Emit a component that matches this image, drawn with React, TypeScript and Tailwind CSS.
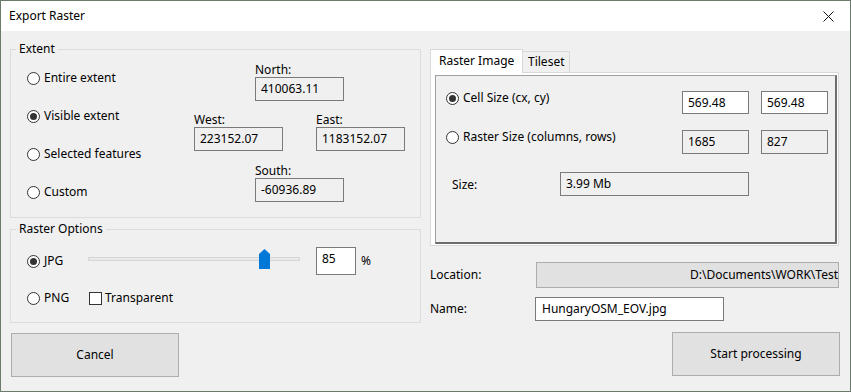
import type { ReactNode } from "react";

function Radio({ checked, label }: { checked?: boolean; label: string }) {
  return (
    <div className="flex items-center h-[16px]">
      <span className="flex h-[13px] w-[13px] items-center justify-center rounded-full border border-[#333333] bg-white">
        {checked && <span className="h-[7px] w-[7px] rounded-full bg-[#333333]" />}
      </span>
      <span className="ml-[4px] whitespace-nowrap">{label}</span>
    </div>
  );
}

function Field({
  value,
  width,
  height = "h-[23px]",
  white,
}: {
  value: string;
  width: string;
  height?: string;
  white?: boolean;
}) {
  return (
    <div
      className={`${width} ${height} flex items-center border border-[#7a7a7a] pl-[5px] ${
        white ? "bg-white" : "bg-[#f0f0f0]"
      }`}
    >
      {value}
    </div>
  );
}

function Coord({ label, value }: { label: string; value: string }) {
  return (
    <div className="flex w-[89px] flex-col">
      <div className="h-[14px] leading-[14px]">{label}</div>
      <Field value={value} width="w-[89px]" height="h-[24px]" />
    </div>
  );
}

function Group({
  title,
  height,
  className = "",
  children,
}: {
  title: string;
  height: string;
  className?: string;
  children: ReactNode;
}) {
  return (
    <fieldset className={`${height} ${className} w-[411px] border border-[#dcdcdc]`}>
      <legend className="ml-[5px] px-[3px] leading-[16px]">{title}</legend>
      {children}
    </fieldset>
  );
}

export default function App() {
  return (
    <div className="flex h-[392px] w-[851px] flex-col border border-[#6b7b6b] bg-[#f0f0f0] font-['Noto_Sans',sans-serif] text-[12px] text-black">
      <div className="flex h-[30px] items-center justify-between bg-white pl-[8px] pr-[11px]">
        <span>Export Raster</span>
        <svg width="11" height="11" viewBox="0 0 11 11" className="mr-[5px]">
          <path d="M0.5 0.5L10.5 10.5M10.5 0.5L0.5 10.5" stroke="#111" strokeWidth="1" />
        </svg>
      </div>

      <div className="flex flex-1">
        {/* left column */}
        <div className="ml-[9px] flex w-[411px] flex-col pt-[10px]">
          <Group title="Extent" height="h-[177px]">
            <div className="flex pl-[16px]">
              <div className="flex w-[167px] flex-col pt-[13px]">
                <div className="h-[38px]"><Radio label="Entire extent" /></div>
                <div className="h-[38px]"><Radio checked label="Visible extent" /></div>
                <div className="h-[38px]"><Radio label="Selected features" /></div>
                <div className="h-[38px]"><Radio label="Custom" /></div>
              </div>
              <div className="flex w-[211px] flex-col items-center pt-[6px]">
                <Coord label="North:" value="410063.11" />
                <div className="mt-[12px] flex w-[211px] justify-between">
                  <Coord label="West:" value="223152.07" />
                  <Coord label="East:" value="1183152.07" />
                </div>
                <div className="mt-[13px]">
                  <Coord label="South:" value="-60936.89" />
                </div>
              </div>
            </div>
          </Group>

          <Group title="Raster Options" height="h-[102px]" className="mt-[3px]">
            <div className="flex flex-col pl-[16px] pt-[10px]">
              <div className="flex h-[28px] items-center">
                <div className="w-[61px]"><Radio checked label="JPG" /></div>
                <div className="relative h-[28px] w-[212px]">
                  <div className="absolute left-0 right-0 top-[10px] h-[4px] border border-[#d6d6d6] bg-[#e7eaea]" />
                  <svg width="11" height="20" viewBox="0 0 11 20" className="absolute left-[171px] top-[2px]">
                    <path d="M0 5L5.5 0L11 5V20H0Z" fill="#0078d7" />
                  </svg>
                </div>
                <div className="ml-[16px] flex h-[28px] w-[40px] items-start border border-[#7a7a7a] bg-white pl-[5px] pt-[2px]">
                  85
                </div>
                <span className="ml-[5px]">%</span>
              </div>
              <div className="mt-[14px] flex items-center">
                <div className="w-[62px]"><Radio label="PNG" /></div>
                <span className="h-[13px] w-[13px] border border-[#333333] bg-white" />
                <span className="ml-[3px]">Transparent</span>
              </div>
            </div>
          </Group>

          <button
            type="button"
            className="ml-[1px] mt-[10px] h-[44px] w-[168px] border border-[#adadad] bg-[#e1e1e1]"
          >
            Cancel
          </button>
        </div>

        {/* right column */}
        <div className="ml-[9px] flex w-[410px] flex-col pt-[18px]">
          <div className="flex items-end">
            <div className="relative z-10 -mb-px h-[24px] w-[93px] border border-b-0 border-[#d9d9d9] bg-white pl-[8px] pt-[2px]">
              Raster Image
            </div>
            <div className="h-[21px] w-[47px] border border-b-0 border-l-0 border-[#d9d9d9] bg-[#f0f0f0] pl-[5px] pt-[1px]">
              Tileset
            </div>
          </div>
          <div className="h-[174px] w-[409px] border border-[#d9d9d9] bg-white pb-px pl-[4px] pr-px pt-[2px]">
            <div className="flex h-full flex-col border-b-2 border-l border-r-2 border-t border-b-[#6d6d6d] border-l-[#a0a0a0] border-r-[#6d6d6d] border-t-[#a0a0a0] bg-[#f0f0f0] pl-[10px] pr-[7px] pt-[15px]">
              <div className="flex items-start justify-between">
                <div className="-mt-[1px]"><Radio checked label="Cell Size (cx, cy)" /></div>
                <div className="flex gap-[12px]">
                  <Field value="569.48" width="w-[67px]" white />
                  <Field value="569.48" width="w-[67px]" white />
                </div>
              </div>
              <div className="mt-[16px] flex items-start justify-between">
                <div className="-mt-[1px]"><Radio label="Raster Size (columns, rows)" /></div>
                <div className="flex gap-[12px]">
                  <Field value="1685" width="w-[67px]" height="h-[24px]" />
                  <Field value="827" width="w-[67px]" height="h-[24px]" />
                </div>
              </div>
              <div className="mt-[18px] flex items-center">
                <span className="w-[114px] pl-[6px] pt-[2px]">Size:</span>
                <Field value="3.99 Mb" width="w-[189px]" height="h-[24px]" />
              </div>
            </div>
          </div>

          <div className="mt-[16px] flex items-center">
            <span className="w-[106px]">Location:</span>
            <div className="flex h-[26px] w-[303px] items-center justify-end overflow-hidden whitespace-nowrap border border-[#adadad] bg-[#e1e1e1]">
              D:\Documents\WORK\Test
            </div>
          </div>
          <div className="mt-[9px] flex items-center">
            <span className="w-[105px]">Name:</span>
            <div className="flex h-[24px] w-[189px] items-center border border-[#7a7a7a] bg-white pl-[6px]">
              HungaryOSM_EOV.jpg
            </div>
          </div>
          <div className="mt-[11px] flex justify-end">
            <button
              type="button"
              className="h-[44px] w-[168px] border border-[#adadad] bg-[#e1e1e1]"
            >
              Start processing
            </button>
          </div>
        </div>
      </div>
    </div>
  );
}
